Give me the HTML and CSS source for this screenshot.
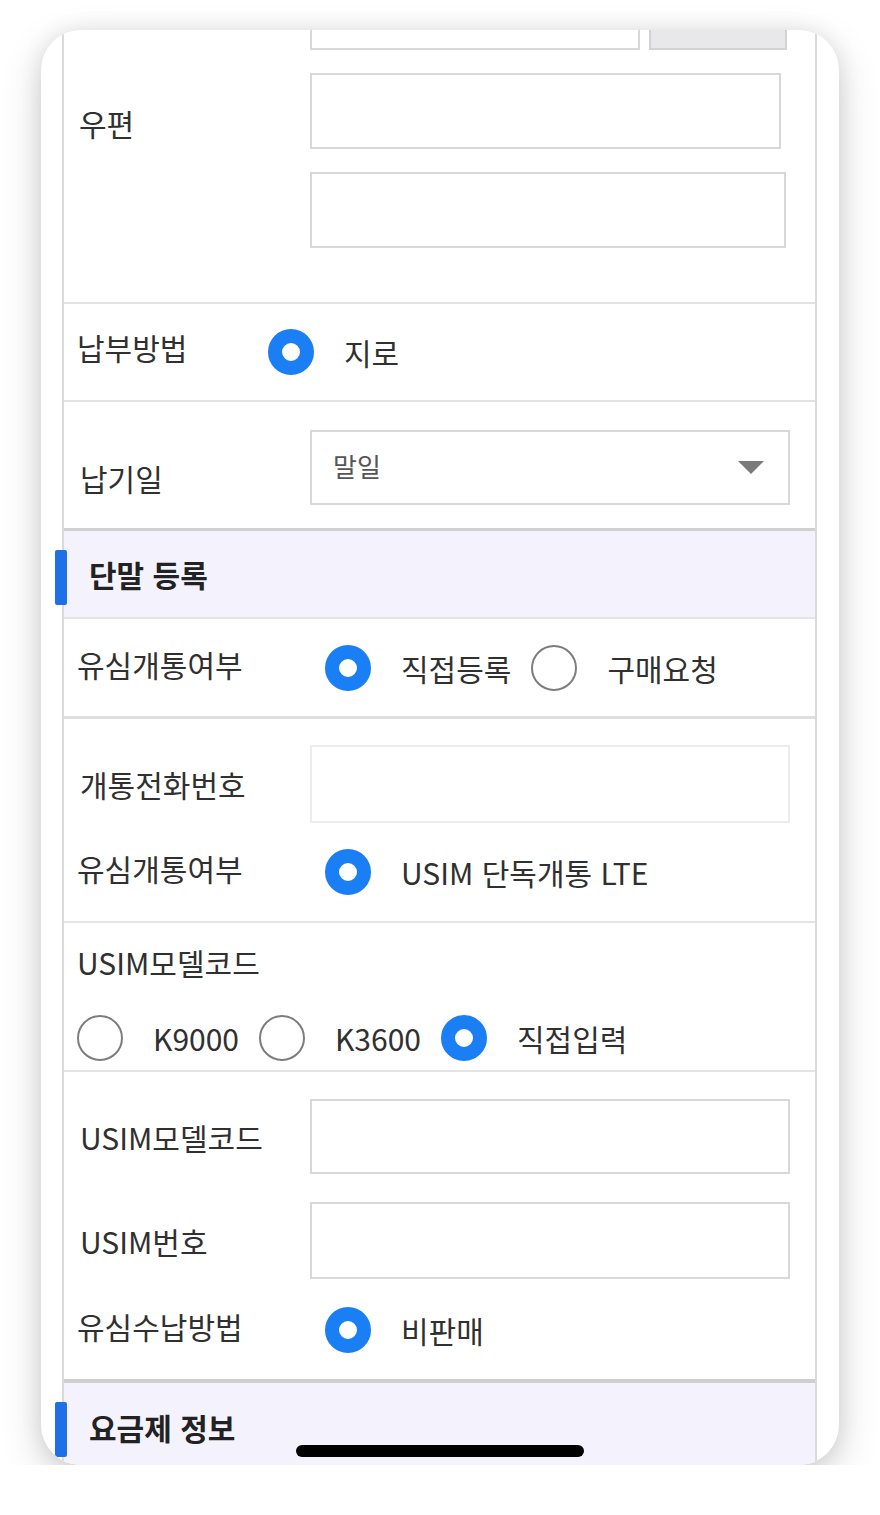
FILE: index.html
```html
<!DOCTYPE html>
<html lang="ko">
<head>
<meta charset="utf-8">
<title>단말 등록</title>
<link rel="stylesheet" href="styles.css">
</head>
<body>
<div class="phone">
  <div class="scroll">
    <div class="table">

      <div class="row addr">
        <div class="label lbl-addr">우편</div>
        <div class="fields">
          <div class="pair">
            <div class="input in-zip"></div>
            <div class="btn"></div>
          </div>
          <div class="input in-a"></div>
          <div class="input in-b"></div>
        </div>
      </div>

      <div class="row pay">
        <div class="label lbl-pay">납부방법</div>
        <div class="options">
          <div class="opt"><span class="radio on"></span><span class="otext">지로</span></div>
        </div>
      </div>

      <div class="row due">
        <div class="label lbl-due">납기일</div>
        <div class="select">
          <span class="sel-text">말일</span>
          <svg class="caret" width="26" height="13" viewBox="0 0 26 13"><polygon points="0,0 26,0 13,13" fill="#7a7a7a"/></svg>
        </div>
      </div>

      <div class="section">
        <span class="bar"></span>
        <h2 class="section-title">단말 등록</h2>
      </div>

      <div class="row usim-open">
        <div class="label lbl-radio">유심개통여부</div>
        <div class="options">
          <div class="opt"><span class="radio on"></span><span class="otext">직접등록</span></div>
          <div class="opt"><span class="radio"></span><span class="otext">구매요청</span></div>
        </div>
      </div>

      <div class="group g-phone">
        <div class="line l-phone">
          <div class="label lbl-input">개통전화번호</div>
          <div class="input in-light in-phone"></div>
        </div>
        <div class="line l-open">
          <div class="label lbl-radio">유심개통여부</div>
          <div class="options">
            <div class="opt"><span class="radio on"></span><span class="otext">USIM 단독개통 LTE</span></div>
          </div>
        </div>
      </div>

      <div class="group g-model">
        <div class="label lbl-model">USIM모델코드</div>
        <div class="options opts-model">
          <div class="opt"><span class="radio"></span><span class="otext">K9000</span></div>
          <div class="opt"><span class="radio"></span><span class="otext">K3600</span></div>
          <div class="opt"><span class="radio on"></span><span class="otext">직접입력</span></div>
        </div>
      </div>

      <div class="group g-usim">
        <div class="line l-code">
          <div class="label lbl-input">USIM모델코드</div>
          <div class="input in-code"></div>
        </div>
        <div class="line l-num">
          <div class="label lbl-input">USIM번호</div>
          <div class="input in-num"></div>
        </div>
        <div class="line l-sale">
          <div class="label lbl-radio">유심수납방법</div>
          <div class="options">
            <div class="opt"><span class="radio on"></span><span class="otext">비판매</span></div>
          </div>
        </div>
      </div>

      <div class="section section-last">
        <span class="bar"></span>
        <h2 class="section-title">요금제 정보</h2>
      </div>

    </div>
  </div>
  <div class="home-bar"></div>
</div>
</body>
</html>
```

FILE: styles.css
```css
* { box-sizing: border-box; }

html, body {
  margin: 0;
  padding: 0;
  background: #ffffff;
}

body {
  font-family: "Noto Sans CJK KR", "Noto Sans", sans-serif;
  color: #303030;
  padding: 30px 0 0 41px;
}

.phone {
  position: relative;
  width: 798px;
  height: 1435px;
  border-radius: 40px;
  overflow: hidden;
  background: #ffffff;
  box-shadow: 0 14px 40px rgba(0, 0, 0, 0.17), 0 0 22px rgba(0, 0, 0, 0.09);
}

.scroll {
  margin-top: -30px;
}

.table {
  margin: 0 22px 0 21px;
  border-left: 2px solid #dadada;
  border-right: 2px solid #dadada;
}

.label {
  font-size: 30px;
  line-height: 40px;
  white-space: nowrap;
  color: #303030;
}

.input {
  border: 2px solid #d8d8d8;
  background: #ffffff;
}

/* ---- address row ---- */
.row.addr {
  display: grid;
  grid-template-columns: 246px 1fr;
  border-bottom: 2px solid #e2e2e2;
  padding-bottom: 54px;
}
.lbl-addr {
  padding: 103px 0 0 15px;
}
.pair {
  display: flex;
  gap: 9px;
  height: 50px;
}
.in-zip { width: 330px; }
.btn {
  width: 138px;
  background: #e8e8ea;
  border: 2px solid #d2d2d2;
}
.in-a {
  width: 471px;
  height: 76px;
  margin-top: 23px;
}
.in-b {
  width: 476px;
  height: 76px;
  margin-top: 23px;
}

/* ---- radios ---- */
.options {
  display: flex;
  align-items: center;
  gap: 20px;
}
.opt {
  display: flex;
  align-items: center;
  gap: 30px;
}
.radio {
  width: 46px;
  height: 46px;
  border-radius: 50%;
  border: 2.5px solid #7d7d7d;
  background: #ffffff;
  flex: none;
}
.radio.on {
  border: 14px solid #1a7ef4;
}
.otext {
  font-size: 30px;
  line-height: 40px;
  color: #303030;
  white-space: nowrap;
}

/* ---- pay row ---- */
.row.pay {
  display: flex;
  align-items: center;
  height: 98px;
  border-bottom: 2px solid #e2e2e2;
}
.lbl-pay {
  width: 204px;
  padding-left: 13px;
  margin-top: -10px;
}

/* ---- due row ---- */
.row.due {
  display: grid;
  grid-template-columns: 246px 480px;
  height: 129px;
  border-bottom: 3px solid #d0d0d0;
}
.lbl-due {
  padding: 56px 0 0 16px;
}
.select {
  margin-top: 28px;
  height: 75px;
  border: 2px solid #d8d8d8;
  display: flex;
  align-items: center;
  justify-content: space-between;
  padding: 0 24px 0 21px;
}
.sel-text {
  font-size: 26px;
  line-height: 30px;
  color: #555555;
  margin-top: -4px;
}
.caret {
  display: block;
}

/* ---- section headers ---- */
.section {
  position: relative;
  height: 88px;
  background: #f4f3fd;
  border-bottom: 2px solid #e4e4e4;
  display: flex;
  align-items: center;
  padding-left: 25px;
}
.section-last {
  border-bottom: none;
}
.bar {
  position: absolute;
  left: -9px;
  top: 19px;
  width: 12px;
  height: 55px;
  border-radius: 2px;
  background: #1f6fe6;
}
.section-title {
  margin: 0;
  font-size: 30px;
  line-height: 40px;
  font-weight: 700;
  color: #222222;
}

/* ---- usim open row ---- */
.row.usim-open {
  display: flex;
  align-items: center;
  height: 100px;
  border-bottom: 3px solid #dedede;
}
.lbl-radio {
  width: 261px;
  padding-left: 13px;
  margin-top: -8px;
}

/* ---- groups ---- */
.group {
  border-bottom: 2px solid #e4e4e4;
}
.line {
  display: flex;
  align-items: center;
}
.lbl-input {
  width: 246px;
  padding-left: 16px;
}
.input.in-light {
  border-color: #ececec;
}

.g-phone {
  padding: 26px 0 26px;
}
.in-phone {
  width: 480px;
  height: 78px;
}
.l-open {
  margin-top: 26px;
}

.g-model {
  padding: 19px 0 9px 13px;
}
.g-model .lbl-model {
  padding: 0;
}
.opts-model {
  margin-top: 33px;
}

.g-usim {
  padding: 27px 0 26px;
  border-bottom: 4px solid #cfcfcf;
}
.in-code {
  width: 480px;
  height: 75px;
}
.l-num {
  margin-top: 28px;
}
.in-num {
  width: 480px;
  height: 77px;
}
.l-sale {
  margin-top: 28px;
}

/* ---- home indicator ---- */
.home-bar {
  position: absolute;
  left: 255px;
  bottom: 8px;
  width: 288px;
  height: 12px;
  border-radius: 6px;
  background: #000000;
}
```
